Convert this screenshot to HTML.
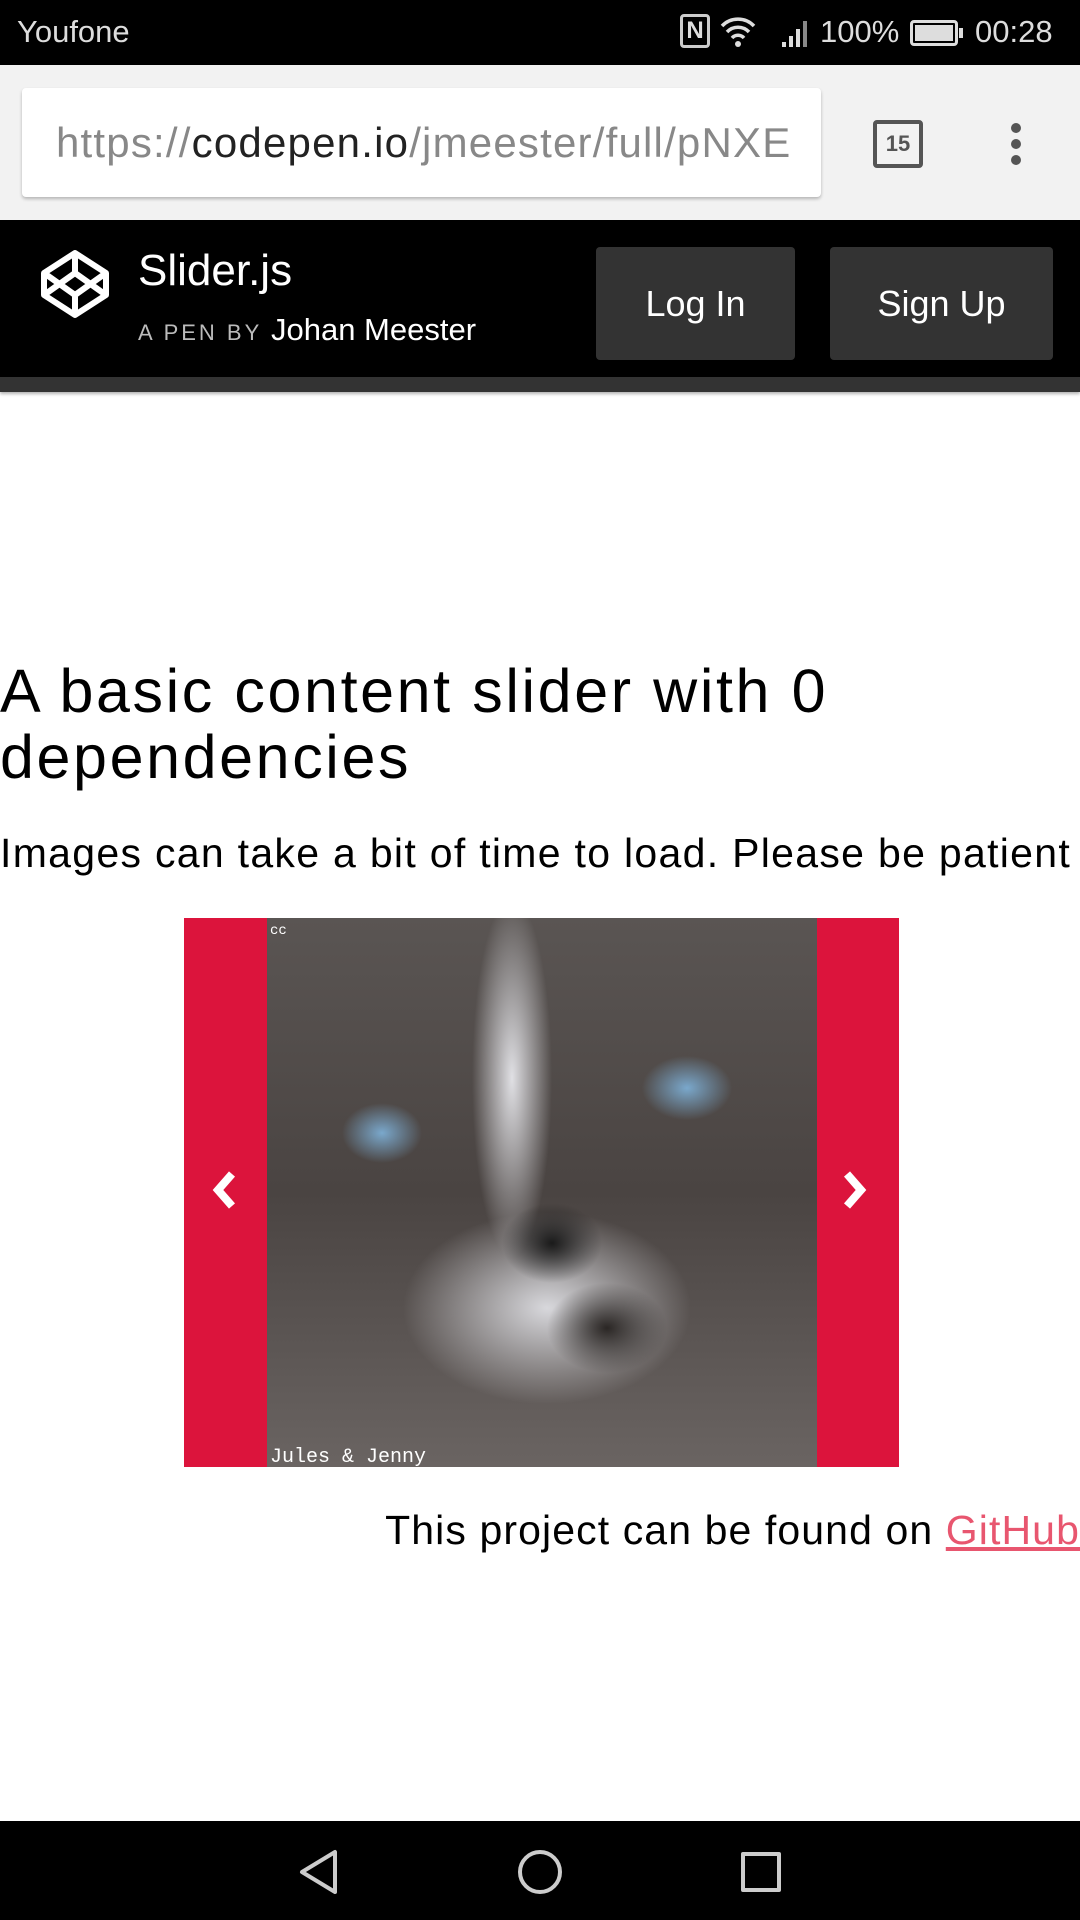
<!DOCTYPE html>
<html><head><meta charset="utf-8"><style>
*{margin:0;padding:0;box-sizing:border-box}
body{width:1080px;height:1920px;background:#fff;font-family:"Liberation Sans",sans-serif;position:relative;overflow:hidden}
.abs{position:absolute}
</style></head><body>
<!-- status bar -->
<div class="abs" style="left:0;top:0;width:1080px;height:65px;background:#000;color:#ddd;font-size:31px">
 <div class="abs" style="left:17px;top:14px">Youfone</div>
 <div class="abs" style="left:680px;top:14px;width:30px;height:34px;border:3px solid #ccc;border-radius:4px;font-size:24px;font-weight:bold;text-align:center;line-height:28px">N</div>
 <svg class="abs" style="left:718px;top:14px" width="40" height="34" viewBox="0 0 40 34"><path d="M4 12a22 22 0 0 1 32 0M9 18a15 15 0 0 1 22 0M14 24a8 8 0 0 1 12 0" stroke="#ddd" stroke-width="3.5" fill="none"/><circle cx="20" cy="30" r="3" fill="#ddd"/></svg>
 <svg class="abs" style="left:780px;top:16px" width="30" height="32"><rect x="2" y="26" width="4" height="5" fill="#ddd"/><rect x="9" y="20" width="4" height="11" fill="#ddd"/><rect x="16" y="13" width="4" height="18" fill="#ddd"/><rect x="23" y="5" width="4" height="26" fill="#888"/></svg>
 <div class="abs" style="left:820px;top:14px">100%</div>
 <div class="abs" style="left:910px;top:20px;width:48px;height:26px;border:3px solid #ddd;border-radius:4px;padding:2px"><div style="background:#ddd;width:100%;height:100%"></div></div>
 <div class="abs" style="left:959px;top:28px;width:4px;height:10px;background:#ddd"></div>
 <div class="abs" style="left:975px;top:14px">00:28</div>
</div>
<!-- address bar -->
<div class="abs" style="left:0;top:65px;width:1080px;height:155px;background:#f2f2f2">
 <div class="abs" style="left:22px;top:23px;width:799px;height:109px;background:#fff;border-radius:4px;box-shadow:0 2px 3px rgba(0,0,0,.25);font-size:42px;letter-spacing:1.2px;line-height:109px;padding-left:34px;color:#888;white-space:nowrap;overflow:hidden">https://<span style="color:#222">codepen.io</span>/jmeester/full/pNXE</div>
 <div class="abs" style="left:873px;top:55px;width:50px;height:48px;border:4px solid #555;border-radius:4px;font-size:22px;font-weight:bold;color:#555;text-align:center;line-height:40px">15</div>
 <div class="abs" style="left:1011px;top:58px;width:10px;height:10px;border-radius:5px;background:#555;box-shadow:0 16px 0 #555,0 32px 0 #555"></div>
</div>
<!-- codepen header -->
<div class="abs" style="left:0;top:220px;width:1080px;height:157px;background:#000;color:#fff">
 <svg class="abs" style="left:40px;top:29px" width="70" height="70" viewBox="0 0 70 70"><g fill="none" stroke="#fff" stroke-width="6" stroke-linejoin="round"><path d="M35 4L66 24V46L35 66L4 46V24Z"/><path d="M35 4V24M35 46V66M4 24L35 46L66 24M4 46L35 24L66 46"/></g></svg>
 <div class="abs" style="left:138px;top:26px;font-size:44px">Slider.js</div>
 <div class="abs" style="left:138px;top:92px;font-size:22px;letter-spacing:3px;color:#bbb">A PEN BY <span style="font-size:31px;letter-spacing:0;color:#fff">Johan Meester</span></div>
 <div class="abs" style="left:596px;top:27px;width:199px;height:113px;background:#333;border-radius:4px;font-size:36px;text-align:center;line-height:113px">Log In</div>
 <div class="abs" style="left:830px;top:27px;width:223px;height:113px;background:#333;border-radius:4px;font-size:36px;text-align:center;line-height:113px">Sign Up</div>
</div>
<div class="abs" style="left:0;top:377px;width:1080px;height:15px;background:#333;box-shadow:0 2px 3px rgba(0,0,0,.3)"></div>
<!-- content -->
<div class="abs" style="left:0;top:658px;font-size:61px;letter-spacing:2.6px;line-height:66px;color:#000;white-space:nowrap">A basic content slider with 0<br>dependencies</div>
<div class="abs" style="left:0;top:830px;font-size:41px;letter-spacing:1.3px;color:#000;white-space:nowrap">Images can take a bit of time to load. Please be patient</div>
<div class="abs" style="left:184px;top:918px;width:715px;height:549px;background:#dc143c">
 <div class="abs" style="left:83px;top:0;width:550px;height:549px;background:
  radial-gradient(ellipse 40px 30px at 115px 215px,#7aa8cc,transparent),
  radial-gradient(ellipse 45px 32px at 420px 170px,#7aa8cc,transparent),
  radial-gradient(ellipse 50px 40px at 285px 325px,#1a1a1a,transparent),
  radial-gradient(ellipse 60px 45px at 340px 410px,#2a2624,transparent),
  radial-gradient(ellipse 180px 120px at 280px 390px,#d8d8dc,transparent 80%),
  radial-gradient(ellipse 40px 180px at 245px 160px,#e0e0e4,transparent),
  linear-gradient(#5a5553,#4a4442 50%,#6a6462);"></div>
 <div class="abs" style="left:86px;top:5px;font-size:14px;color:#fff;font-family:'Liberation Mono',monospace">cc</div>
 <div class="abs" style="left:86px;top:528px;font-size:20px;color:#fff;font-family:'Liberation Mono',monospace">Jules &amp; Jenny</div>
 <svg class="abs" style="left:26px;top:252px" width="30" height="40"><path d="M22 4L8 20L22 36" stroke="#fff" stroke-width="8" fill="none"/></svg>
 <svg class="abs" style="left:655px;top:252px" width="30" height="40"><path d="M8 4L22 20L8 36" stroke="#fff" stroke-width="8" fill="none"/></svg>
</div>
<div class="abs" style="right:0;top:1507px;font-size:41px;letter-spacing:1.1px;color:#000;white-space:nowrap">This project can be found on <span style="color:#e8566f;text-decoration:underline">GitHub</span></div>
<!-- nav bar -->
<div class="abs" style="left:0;top:1821px;width:1080px;height:99px;background:#000">
 <svg class="abs" style="left:295px;top:26px" width="50" height="50"><path d="M40 5V45L7 25Z" stroke="#ccc" stroke-width="4" fill="none" stroke-linejoin="round"/></svg>
 <div class="abs" style="left:518px;top:29px;width:44px;height:44px;border:4px solid #ccc;border-radius:50%"></div>
 <div class="abs" style="left:741px;top:31px;width:40px;height:40px;border:4px solid #ccc;border-radius:2px"></div>
</div>
</body></html>
